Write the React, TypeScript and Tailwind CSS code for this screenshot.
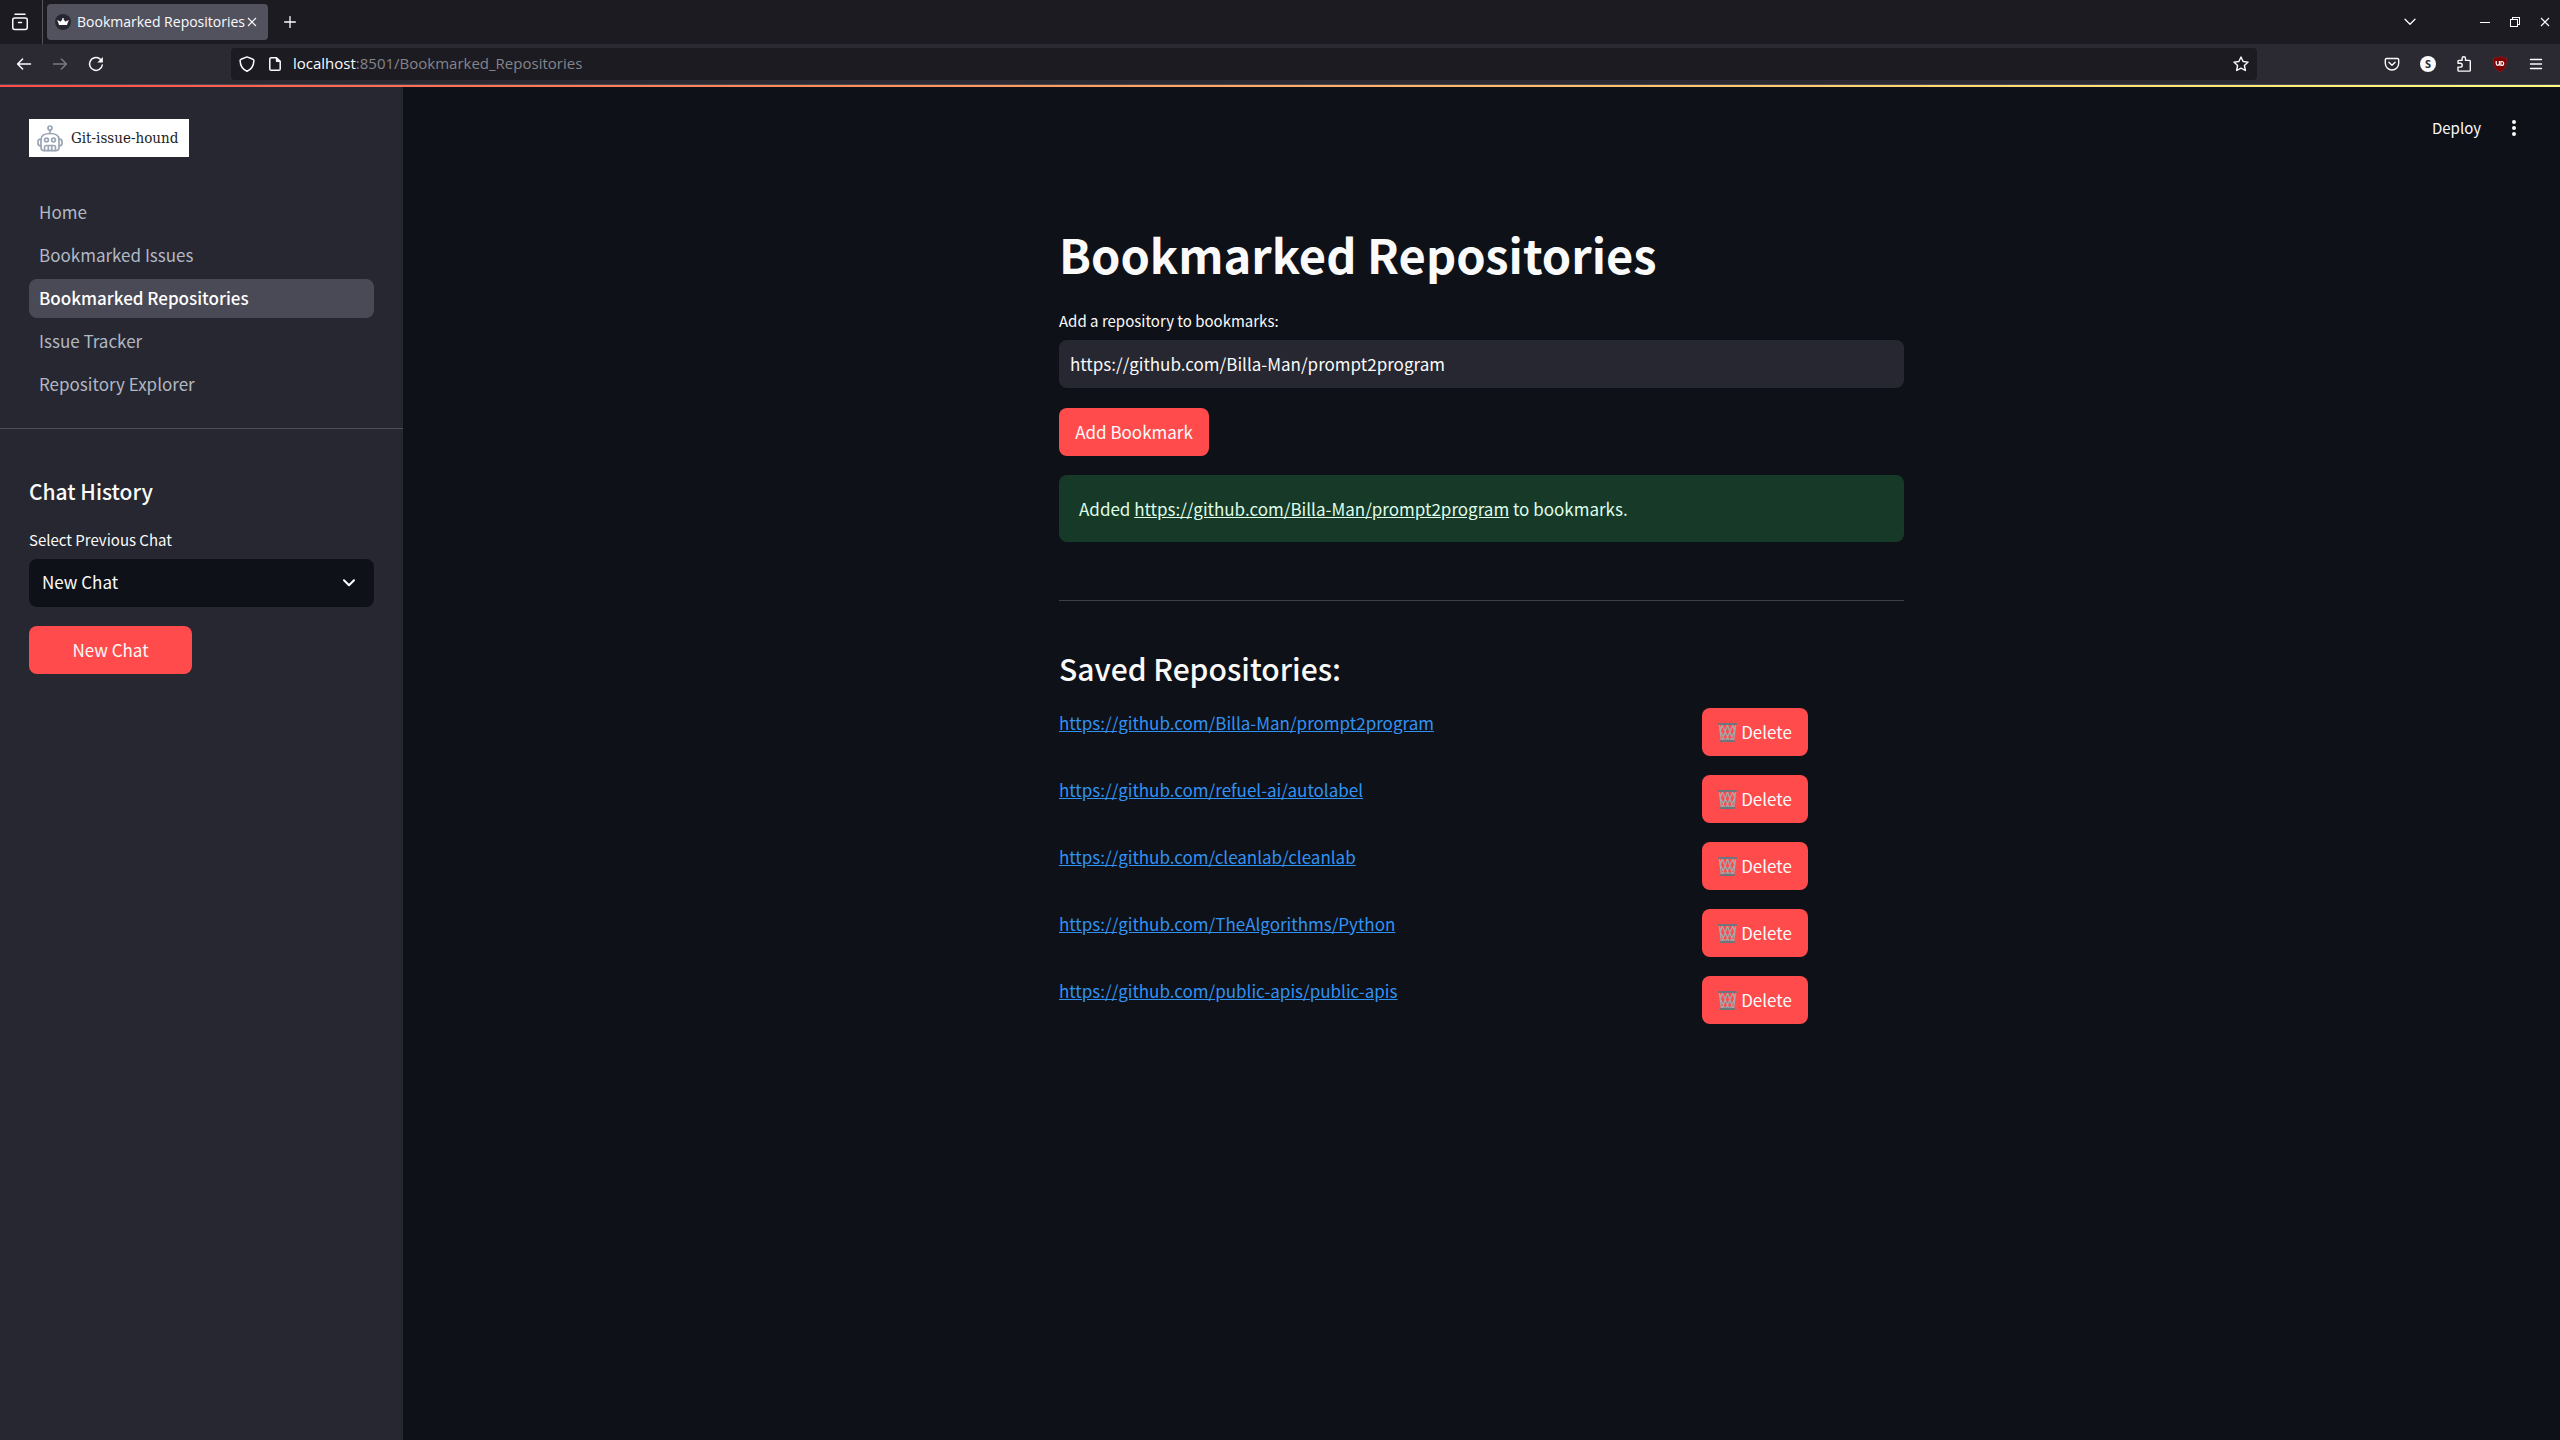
import React from "react";

const UI_FONT = "font-['Open_Sans','Noto_Sans',sans-serif]";

type IconProps = { className?: string };

function ArchiveIcon() {
  return (
    <svg className="size-5" viewBox="0 0 20 20" fill="none" stroke="#fbfbfe" strokeWidth="1.5" strokeLinecap="round" strokeLinejoin="round">
      <path d="M5 2.2h10" />
      <rect x="2.75" y="6" width="14.5" height="11.500" rx="2" />
      <path d="M8.500 10.500h3" />
    </svg>
  );
}

function Favicon() {
  return (
    <svg className="size-4 shrink-0" viewBox="0 0 16 16">
      <circle cx="8" cy="8" r="8" fill="#262730" />
      <path d="M2 6.300c1.500 0 2.600.8 3.600 1.400L8 4.600l2.400 3.100c1-.6 2.100-1.400 3.600-1.400-1 1.300-1.700 2.900-2 4.700H4c-.3-1.800-1-3.400-2-4.700z" fill="#fff" />
      <circle cx="8" cy="4.700" r=".8" fill="#fff" />
    </svg>
  );
}

function CloseIcon({ className }: IconProps) {
  return (
    <svg className={className} viewBox="0 0 10 10" fill="none" stroke="#fbfbfe" strokeWidth="1.100">
      <path d="M1 1l8 8M9 1L1 9" />
    </svg>
  );
}

function PlusIcon() {
  return (
    <svg className="size-3" viewBox="0 0 12 12" fill="none" stroke="#fbfbfe" strokeWidth="1.300" strokeLinecap="round">
      <path d="M6 .6v10.800M.6 6h10.800" />
    </svg>
  );
}

function BackIcon() {
  return (
    <svg className="size-4" viewBox="0 0 16 16" fill="none" stroke="#fbfbfe" strokeWidth="1.500" strokeLinecap="round" strokeLinejoin="round">
      <path d="M14.500 8H1.700M6.600 3L1.600 8l5 5" />
    </svg>
  );
}

function ForwardIcon() {
  return (
    <svg className="size-4" viewBox="0 0 16 16" fill="none" stroke="#7b7a82" strokeWidth="1.500" strokeLinecap="round" strokeLinejoin="round">
      <path d="M1.500 8h12.800M9.400 3l5 5-5 5" />
    </svg>
  );
}

function ReloadIcon() {
  return (
    <svg className="size-4" viewBox="0 0 16 16" fill="none" stroke="#fbfbfe" strokeWidth="1.500" strokeLinecap="round">
      <path d="M14.300 9A6.400 6.400 0 1 1 11.600 2.700l1.700 1.500" />
      <path d="M14.900 1v5.500H9.400z" fill="#fbfbfe" stroke="none" />
    </svg>
  );
}

function ShieldIcon() {
  return (
    <svg className="size-4" viewBox="0 0 16 16" fill="none" stroke="#fbfbfe" strokeWidth="1.500" strokeLinejoin="round">
      <path d="M8 .9L14 3.300c.6.300.9.700.9 1.300C14.700 9.400 12.500 13.300 8 15.200 3.500 13.300 1.300 9.400 1.100 4.600c0-.6.300-1 .9-1.300z" />
    </svg>
  );
}

function PageIcon() {
  return (
    <svg className="size-4" viewBox="0 0 16 16" fill="none" stroke="#fbfbfe" strokeWidth="1.500" strokeLinejoin="round">
      <path d="M9.500 1.700H4.200c-.8 0-1.400.6-1.400 1.400v9.800c0 .8.600 1.400 1.400 1.400h7.600c.8 0 1.400-.6 1.400-1.400V5.400z" />
      <path d="M8.800 1.200v4.100c0 .5.300.8.800.8h4.100z" fill="#fbfbfe" stroke="none" />
    </svg>
  );
}

function StarIcon() {
  return (
    <svg className="size-4" viewBox="0 0 16 16" fill="none" stroke="#fbfbfe" strokeWidth="1.400" strokeLinejoin="round">
      <path d="M8 1l2.100 4.500 5 .6-3.700 3.400 1 5L8 12.100l-4.400 2.400 1-5L.9 6.100l5-.6z" />
    </svg>
  );
}

function PocketIcon() {
  return (
    <svg className="size-4" viewBox="0 0 16 16" fill="none" stroke="#fbfbfe" strokeWidth="1.400" strokeLinecap="round" strokeLinejoin="round">
      <path d="M2.600 2.500h10.800c.8 0 1.300.5 1.300 1.300v3.500a6.700 6.700 0 0 1-13.400 0V3.800c0-.8.500-1.300 1.300-1.300z" />
      <path d="M4.900 6.300L8 9.300l3.100-3" />
    </svg>
  );
}

function PuzzleIcon() {
  return (
    <svg className="size-4" viewBox="0 0 16 16" fill="none" stroke="#fbfbfe" strokeWidth="1.400" strokeLinejoin="round">
      <path d="M2 7.300V5.200c0-.5.300-.8.800-.8h3.300V2.500a1.700 1.700 0 0 1 3.400 0v1.900h4c.5 0 .8.300.8.800v9.100c0 .5-.3.800-.8.800H2.800c-.5 0-.8-.3-.8-.8v-3.200h2.300a1.900 1.900 0 0 0 0-3.800z" />
    </svg>
  );
}

function BlockerIcon() {
  return (
    <svg className="size-4" viewBox="0 0 16 16">
      <path d="M8 .3c2 1.300 4.200 1.700 6.700 1.800.2 6.400-1 11-6.700 13.700C2.300 13.100 1.100 8.500 1.300 2.100 3.800 2 6 1.600 8 .3z" fill="#800000" stroke="#9a2430" strokeWidth=".5" />
      <path d="M4.200 5v2.600c0 2.300 3.200 2.300 3.200 0V5v4.600M8.900 5.500h.9c2.500 0 2.500 3.900 0 3.900h-.9z" fill="none" stroke="#fff" strokeWidth="1.200" />
    </svg>
  );
}

function MenuIcon() {
  return (
    <svg className="size-4" viewBox="0 0 16 16" fill="none" stroke="#fbfbfe" strokeWidth="1.400" strokeLinecap="round">
      <path d="M2.500 3.500h11M2.500 8h11M2.500 12.500h11" />
    </svg>
  );
}

function ChevronIcon({ className }: IconProps) {
  return (
    <svg className={className} viewBox="0 0 14 8" fill="none" stroke="currentColor" strokeLinecap="round" strokeLinejoin="round">
      <path d="M2 1.300l5 5 5-5" />
    </svg>
  );
}

function RobotIcon() {
  return (
    <svg className="h-[27px] w-[26px] shrink-0" viewBox="0 0 26 27" fill="none" stroke="#9ba5b4" strokeWidth="1.700" strokeLinecap="round" strokeLinejoin="round">
      <circle cx="13" cy="3" r="2" />
      <path d="M13 5v3.500" />
      <path d="M4 14.500c0-3.800 3.500-6 9-6s9 2.200 9 6v7.700c0 2.200-1.300 3.500-3.500 3.500h-11C5.300 25.700 4 24.400 4 22.200z" />
      <path d="M3.800 14.200C1.800 14.200 1 15 1 16.500v2c0 1.500.8 2.300 2.800 2.300M22.200 14.200c2 0 2.800.8 2.800 2.300v2c0 1.500-.8 2.300-2.800 2.300" />
      <circle cx="9.500" cy="15" r="1.900" />
      <circle cx="16.500" cy="15" r="1.900" />
      <path d="M7.500 25.500v-3c0-1.200.7-2 2-2h7c1.300 0 2 .8 2 2v3M11.300 20.500v5M14.700 20.500v5" />
    </svg>
  );
}

function TrashIcon() {
  return (
    <svg className="size-[19px] shrink-0" viewBox="0 0 19 19" fill="none">
      <path
        d="M1.300 2l2 15M17.700 2l-2 15M4.200 2L1.900 6.500 6.500 17M4.200 2l6.700 15M9.500 2l5.300 15M14.800 2l1.500 5M14.800 2L8.100 17M9.500 2L4.200 17M17.100 6.500L12.500 17M14.800 2l2.300 4.500M4.200 2L2.700 7"
        stroke="#a3a9ad"
        strokeWidth="1.200"
      />
      <rect x="0" y="0" width="19" height="2" rx=".8" fill="#6d767d" />
      <rect x="2" y="17" width="15" height="2" rx=".6" fill="#6d767d" />
    </svg>
  );
}

function BrowserChrome() {
  return (
    <header className={`text-[#fbfbfe] ${UI_FONT}`}>
      <div className="flex h-11 items-center justify-between bg-[#1c1b22]">
        <div className="flex h-full items-center">
          <button type="button" aria-label="View tabs" className="flex h-full w-[43px] items-center border-r border-[#55545e] pl-[10px]">
            <ArchiveIcon />
          </button>
          <div className="ml-1 flex h-9 w-[221px] items-center rounded bg-[#52525e] pr-[11px] pl-2 text-[14px] leading-5">
            <Favicon />
            <span className="ml-[6px] flex-1 whitespace-nowrap">Bookmarked Repositories</span>
            <button type="button" aria-label="Close tab">
              <CloseIcon className="size-[10px]" />
            </button>
          </div>
          <button type="button" aria-label="New tab" className="ml-4 flex size-3 items-center">
            <PlusIcon />
          </button>
        </div>
        <div className="flex items-center pr-[10px]">
          <button type="button" aria-label="List all tabs" className="mr-[63px]">
            <ChevronIcon className="h-2 w-[14px] stroke-[1.3]" />
          </button>
          <button type="button" aria-label="Minimize" className="mr-5 flex size-[10px] items-center">
            <span className="h-px w-full bg-white" />
          </button>
          <button type="button" aria-label="Restore" className="mr-5">
            <svg className="size-[10px]" viewBox="0 0 10 10" fill="none" stroke="#fff" shapeRendering="crispEdges">
              <path d="M.5 2.500h7v7h-7zM2.500 2.500v-2h7v7h-2" />
            </svg>
          </button>
          <button type="button" aria-label="Close window">
            <CloseIcon className="size-[10px]" />
          </button>
        </div>
      </div>
      <div className="flex h-[41px] items-center justify-between border-b border-[#4a4953] bg-[#2b2a33] pr-4 pl-4">
        <div className="flex w-[215px] items-center gap-5">
          <button type="button" aria-label="Back"><BackIcon /></button>
          <button type="button" aria-label="Forward"><ForwardIcon /></button>
          <button type="button" aria-label="Reload"><ReloadIcon /></button>
        </div>
        <div className="flex h-8 flex-1 items-center rounded bg-[#1c1b22] px-2 text-[15px] leading-6">
          <ShieldIcon />
          <span className="ml-3"><PageIcon /></span>
          <span className="ml-[10px] flex-1 pb-0.5 text-[#85848b]">
            <span className="text-[#fbfbfe]">localhost</span>:8501/Bookmarked_Repositories
          </span>
          <button type="button" aria-label="Bookmark this page"><StarIcon /></button>
        </div>
        <div className="ml-[127px] flex items-center gap-5">
          <button type="button" aria-label="Save to Pocket"><PocketIcon /></button>
          <button type="button" className="flex size-4 items-center justify-center rounded-full bg-[#fbfbfe] text-[11px] font-bold text-[#2b2a33]">S</button>
          <button type="button" aria-label="Extensions"><PuzzleIcon /></button>
          <button type="button" aria-label="Content blocker"><BlockerIcon /></button>
          <button type="button" aria-label="Application menu"><MenuIcon /></button>
        </div>
      </div>
    </header>
  );
}

const pages = ["Home", "Bookmarked Issues", "Bookmarked Repositories", "Issue Tracker", "Repository Explorer"];

function Sidebar() {
  return (
    <aside className="w-[403px] shrink-0 bg-[#262730]">
      <div className="px-[29px] pt-8">
        <a href="#home" className="flex h-[38px] w-40 items-center gap-2 bg-white pl-2 font-['DejaVu_Serif_Condensed','DejaVu_Serif',serif] text-[15px] leading-5 whitespace-nowrap text-[#1c1c1c]">
          <RobotIcon />
          Git-issue-hound
        </a>
        <nav className="mt-9 flex flex-col gap-1">
          {pages.map((page) =>
            page === "Bookmarked Repositories" ? (
              <a key={page} href="#page" aria-current="page" className="rounded-lg bg-[#494a55] px-[10px] pb-0.5 text-[17px] leading-[37px] font-medium text-white">
                {page}
              </a>
            ) : (
              <a key={page} href="#page" className="rounded-lg px-[10px] pb-0.5 text-[17px] leading-[37px] text-[#b2b7c4]">
                {page}
              </a>
            ),
          )}
        </nav>
      </div>
      <hr className="mt-6 border-[#4c4d55]" />
      <div className="px-[29px] pt-12">
        <h2 className="text-[21px] leading-7 font-medium text-[#fafafa]">Chat History</h2>
        <label htmlFor="chat" className="mt-[23px] block text-[15px] leading-6 text-[#fafafa]">
          Select Previous Chat
        </label>
        <div className="relative mt-[7px]">
          <select id="chat" className="h-12 w-full appearance-none rounded-lg bg-[#0e1117] px-[13px] pb-0.5 text-[17px] text-[#fafafa]">
            <option>New Chat</option>
          </select>
          <ChevronIcon className="pointer-events-none absolute top-5 right-[18px] h-2 w-[14px] stroke-2 text-white" />
        </div>
        <button type="button" className="mt-[19px] h-12 w-[163px] rounded-lg bg-[#ff4b4b] text-[17px] text-[#fafafa]">
          New Chat
        </button>
      </div>
    </aside>
  );
}

const repos = [
  "https://github.com/Billa-Man/prompt2program",
  "https://github.com/refuel-ai/autolabel",
  "https://github.com/cleanlab/cleanlab",
  "https://github.com/TheAlgorithms/Python",
  "https://github.com/public-apis/public-apis",
];

export default function App() {
  return (
    <div className="flex min-h-screen flex-col bg-[#0e1117] font-['Noto_Sans_CJK_SC','Source_Sans_Pro',sans-serif] text-[17px] text-[#fafafa]">
      <BrowserChrome />
      <div className="h-[2px] bg-linear-to-r from-[#ff4b4b] to-[#fffd80]" />
      <div className="flex flex-1">
        <Sidebar />
        <main className="flex-1">
          <div className="flex h-[82px] items-center justify-end gap-[31px] pr-11">
            <button type="button" className="text-[15px] leading-6">Deploy</button>
            <button type="button" aria-label="Main menu">
              <svg className="h-4 w-1" viewBox="0 0 4 16" fill="#fafafa">
                <circle cx="2" cy="2" r="2" />
                <circle cx="2" cy="8" r="2" />
                <circle cx="2" cy="14" r="2" />
              </svg>
            </button>
          </div>
          <div className="mx-auto w-full max-w-[845px] pt-[53px]">
            <h1 className="text-[47px] leading-[64px] font-bold">Bookmarked Repositories</h1>
            <label htmlFor="repo" className="mt-[23px] block text-[15px] leading-6">
              Add a repository to bookmarks:
            </label>
            <input
              id="repo"
              type="text"
              defaultValue="https://github.com/Billa-Man/prompt2program"
              className="mt-[7px] block h-12 w-full rounded-lg bg-[#262730] px-[11px] pb-0.5 text-[17px]"
            />
            <button type="button" className="mt-5 block h-12 w-[150px] rounded-lg bg-[#ff4b4b]">
              Add Bookmark
            </button>
            <div role="status" className="mt-[19px] rounded-lg bg-[#173928] px-5 py-5 leading-[27px] text-[#dffde9]">
              Added{" "}
              <a href="https://github.com/Billa-Man/prompt2program" className="underline">
                https://github.com/Billa-Man/prompt2program
              </a>{" "}
              to bookmarks.
            </div>
            <hr className="mt-[58px] border-[#3e4045]" />
            <h2 className="mt-[46px] text-[30px] leading-[42px] font-medium">Saved Repositories:</h2>
            <ul className="mt-[19px] flex flex-col gap-[19px]">
              {repos.map((repo) => (
                <li key={repo} className="flex items-start">
                  <div className="flex-1 leading-[29px]">
                    <a href={repo} className="text-[#3192f4] underline">
                      {repo}
                    </a>
                  </div>
                  <div className="w-[202px]">
                    <button type="button" className="flex h-12 w-[106px] items-center justify-center gap-1 rounded-lg bg-[#ff4b4b]">
                      <TrashIcon />
                      Delete
                    </button>
                  </div>
                </li>
              ))}
            </ul>
          </div>
        </main>
      </div>
    </div>
  );
}
